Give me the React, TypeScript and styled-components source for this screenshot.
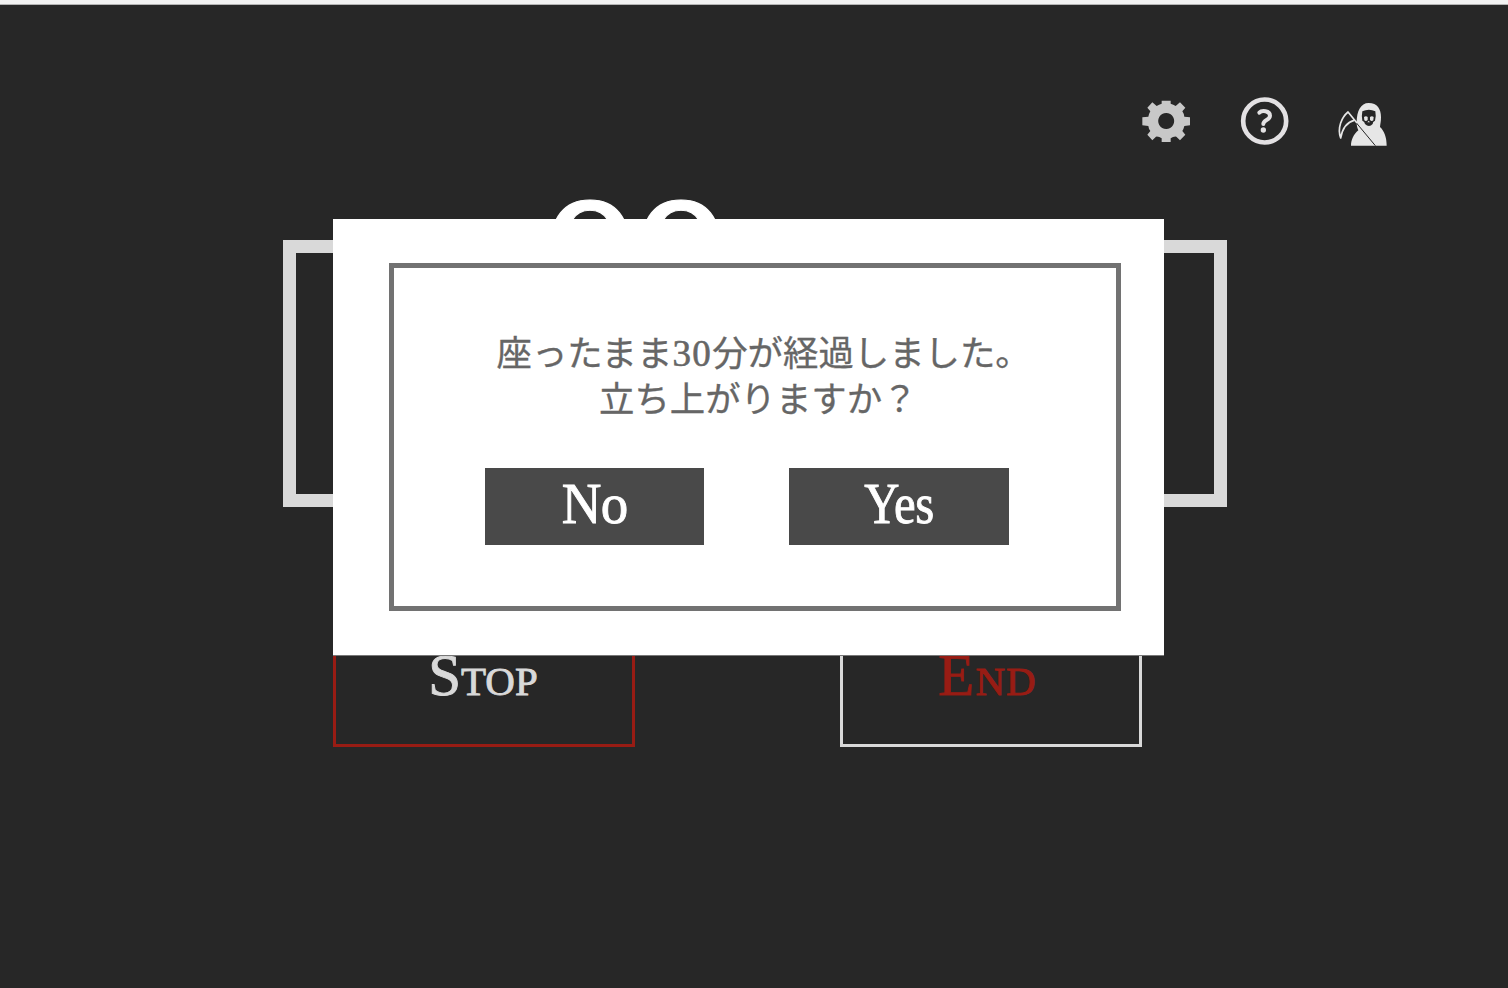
import React from "react";
import styled, { createGlobalStyle } from "styled-components";

const GlobalStyle = createGlobalStyle`
  *, *::before, *::after { box-sizing: border-box; }
  body { margin: 0; background: #272727; }
`;

const Page = styled.div`
  position: relative;
  display: flex;
  flex-direction: column;
  width: 1508px;
  height: 988px;
  overflow: hidden;
  background: #272727;
  border-top: 4px solid #f2f2f2;
  box-shadow: inset 0 1px 0 #b4b4b4;
  font-family: "Liberation Serif", "Noto Sans CJK JP", serif;
`;

const Toolbar = styled.header`
  display: flex;
  justify-content: flex-end;
  height: 236px;
  padding: 81px 103px 0 0;
  gap: 17.5px;
`;

const IconButton = styled.button`
  width: 80px;
  height: 75px;
  padding: 0;
  border: 0;
  background: none;
  svg { display: block; }
`;

const TimerFrame = styled.main`
  display: flex;
  width: 944px;
  height: 267px;
  margin-left: 283px;
  border: 13px solid #d9d9d9;
`;

const Minutes = styled.div`
  margin: -66px 0 0 244px;
  color: #fff;
  font: 131px/1 "DejaVu Sans", sans-serif;
  letter-spacing: -7.5px;
  transform: scaleX(1.2);
  transform-origin: left;
  -webkit-text-stroke: 1px #fff;
`;

const Controls = styled.div`
  display: flex;
  gap: 205px;
  margin: 99px 0 0 333px;
`;

const ControlButton = styled.button<{ $line: string; $ink: string; $spacing: number; $shift: number }>`
  width: 302px;
  height: 141px;
  padding: 0 ${(p) => p.$shift}px 2px 0;
  border: 3px solid ${(p) => p.$line};
  background: transparent;
  color: ${(p) => p.$ink};
  font: 59px/1 "Liberation Serif", serif;
  font-variant-caps: small-caps;
  letter-spacing: ${(p) => p.$spacing}px;
  -webkit-text-stroke: 0.9px ${(p) => p.$ink};
`;

const Modal = styled.section`
  position: absolute;
  left: 333px;
  top: 215px;
  width: 831px;
  height: 437px;
  padding: 44px 43px 44px 56px;
  background: #fff;
  border-bottom: 1px solid #777;
`;

const ModalFrame = styled.div`
  display: flex;
  flex-direction: column;
  height: 348px;
  border: 5px solid #727272;
`;

const Message = styled.p`
  margin: 63px 0 0;
  color: #666;
  font-size: 35.4px;
  line-height: 46px;
  white-space: nowrap;
  -webkit-text-stroke: 0.3px #666;
`;

const Line = styled.span<{ $indent: number }>`
  display: block;
  padding-left: ${(p) => p.$indent}px;
`;

const Numeral = styled.span`
  font-size: 37px;
  letter-spacing: 1.4px;
  -webkit-text-stroke: 0.6px #666;
`;

const Answers = styled.div`
  display: flex;
  gap: 85px;
  margin: 45px 0 0 91px;
`;

const Answer = styled.button`
  width: 219.4px;
  height: 77px;
  padding: 0 0 5px;
  border: 0;
  background: #494949;
  color: #fff;
  font: 56px/1 "Liberation Serif", serif;
  letter-spacing: -0.5px;
  -webkit-text-stroke: 0.9px #fff;
`;

const AnswerLabel = styled.span<{ $stretch: number }>`
  display: inline-block;
  transform: scaleX(${(p) => p.$stretch});
`;

const Gear = () => (
  <svg width="80" height="75" viewBox="0 0 240 225">
    <path fill="#c8c8c8" fillRule="evenodd" d="M95 47H122V56Q130 58 137 63L150 52L166 68L157 79Q162 86 163 95L180 97V121L163 123Q161 132 157 138L166 149L150 166L139 155Q130 154 122 160V171H95V160Q87 154 78 155L67 166L52 149L61 138Q56 132 55 123L37 121V97L55 95Q57 86 61 79L52 68L67 52L80 63Q87 58 95 56ZM108.500 84a24 24 0 1 0 .1 0z" />
  </svg>
);

const Help = () => (
  <svg width="80" height="75" viewBox="0 0 240 225">
    <g fill="none" stroke="#e3e1e3" strokeWidth="14">
      <circle cx="110" cy="108" r="64.5" />
      <path strokeWidth="12" strokeLinecap="round" strokeLinejoin="round" d="M94 83C101 75 126 76 126 92C126 106 106 104 106 117" />
    </g>
    <circle cx="106" cy="135" r="8" fill="#e3e1e3" />
  </svg>
);

const Reaper = () => (
  <svg width="80" height="75" viewBox="0 -15 240 225">
    <path fill="#e6e6e6" d="M78 167c0-18 8-34 22-46-3-8-5-12-5-24 0-34 12-58 36-58 26 0 37 18 37 43 0 13-2 20-3 29 13 12 20 31 20 56z" />
    <path fill="#272727" d="M112 64q20-10 39 0q3 15-1 28q-7 3-7 10q-5 6-11 6t-12-6q-1-7-8-10q-3-13 0-28z" />
    <path fill="#e6e6e6" d="M117 81q6-5 11 0v9q-5 6-10 1zM135 81q6-5 11 0l-1 10q-5 5-10-1zM131 92l4 5h-8z" />
    <path stroke="#272727" strokeWidth="3" d="M91 95l60 72" />
    <path fill="none" stroke="#e6e6e6" strokeWidth="5" strokeLinejoin="round" d="M96 99L69 66C50 82 36 114 47 144c4-22 16-47 40-53" />
  </svg>
);

export default function App() {
  return (
    <>
      <GlobalStyle />
      <Page>
        <Toolbar>
          <IconButton aria-label="Settings"><Gear /></IconButton>
          <IconButton aria-label="Help"><Help /></IconButton>
          <IconButton aria-label="Reaper"><Reaper /></IconButton>
        </Toolbar>
        <TimerFrame>
          <Minutes>00</Minutes>
        </TimerFrame>
        <Controls>
          <ControlButton $line="#981c14" $ink="#d9d9d9" $spacing={0} $shift={2}>Stop</ControlButton>
          <ControlButton $line="#d9d9d9" $ink="#981c14" $spacing={1} $shift={7}>End</ControlButton>
        </Controls>
        <Modal role="dialog">
          <ModalFrame>
            <Message>
              <Line $indent={102.5}>座ったまま<Numeral>30</Numeral>分が経過しました。</Line>
              <Line $indent={205}>立ち上がりますか？</Line>
            </Message>
            <Answers>
              <Answer><AnswerLabel $stretch={0.98}>No</AnswerLabel></Answer>
              <Answer><AnswerLabel $stretch={0.87}>Yes</AnswerLabel></Answer>
            </Answers>
          </ModalFrame>
        </Modal>
      </Page>
    </>
  );
}
